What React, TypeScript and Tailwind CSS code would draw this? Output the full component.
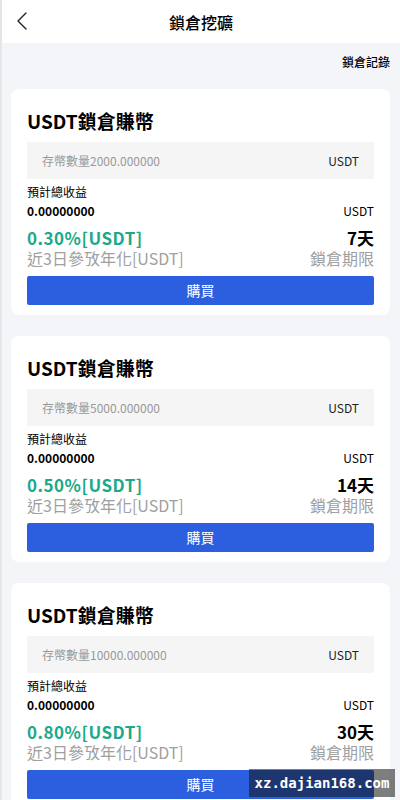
import React from "react";

const cards = [
  { amount: "2000.000000", rate: "0.30%[USDT]", days: "7天" },
  { amount: "5000.000000", rate: "0.50%[USDT]", days: "14天" },
  { amount: "10000.000000", rate: "0.80%[USDT]", days: "30天" },
];

function Card({ amount, rate, days }: { amount: string; rate: string; days: string }) {
  return (
    <div className="bg-white rounded-[8px] px-4 pt-[18px] pb-[10px]">
      <div className="text-[19px] leading-[28px] font-bold text-black">USDT鎖倉賺幣</div>
      <div className="mt-[7px] h-[37px] bg-[#f5f5f5] flex items-center justify-between pl-[15px] pr-[15px]">
        <span className="text-[12px] text-[#999999]">存幣數量{amount}</span>
        <span className="text-[12px] text-[#222222]">USDT</span>
      </div>
      <div className="mt-[4px] text-[12px] leading-[17px] text-black">預計總收益</div>
      <div className="flex justify-between items-center mt-[2px] leading-[17px]">
        <span className="text-[12px] font-bold text-black">0.00000000</span>
        <span className="text-[12px] text-black">USDT</span>
      </div>
      <div className="flex justify-between items-end mt-[9px]">
        <div className="flex flex-col">
          <span className="text-[17px] leading-[20px] font-bold text-[#1ba98a] tracking-[0.5px]">{rate}</span>
          <span className="text-[16px] leading-[20px] text-[#a0a0a0]">近3日參攷年化[USDT]</span>
        </div>
        <div className="flex flex-col items-end">
          <span className="text-[17px] leading-[20px] font-bold text-black">{days}</span>
          <span className="text-[16px] leading-[20px] text-[#a0a0a0]">鎖倉期限</span>
        </div>
      </div>
      <button className="mt-[8px] w-full h-[29px] bg-[#2b5fe0] rounded-[2px] text-white text-[14px] flex items-center justify-center">
        購買
      </button>
    </div>
  );
}

export default function App() {
  return (
    <div
      className="relative w-[400px] h-[800px] overflow-hidden bg-[#f4f5f9] border-l-[2px] border-[#e6e6e8]"
      style={{ fontFamily: '"Noto Sans CJK TC", "Noto Sans", sans-serif' }}
    >
      <div className="h-[43px] bg-white relative flex items-center justify-center">
        <svg className="absolute left-[12px] top-[11px]" width="16" height="20" viewBox="0 0 16 20" fill="none">
          <path d="M12 2 L4 10 L12 18" stroke="#222" strokeWidth="1.4" strokeLinecap="round" strokeLinejoin="round" />
        </svg>
        <span className="text-[16px] font-medium text-black">鎖倉挖礦</span>
      </div>
      <div className="flex justify-end pr-[10px] pt-[10px] h-[46px]">
        <span className="text-[12px] font-medium text-black leading-[17px]">鎖倉記錄</span>
      </div>
      <div className="flex flex-col gap-[21px] pl-[9px] pr-[10px]">
        {cards.map((c, i) => (
          <Card key={i} {...c} />
        ))}
      </div>
      <div
        className="absolute left-[247px] top-[769px] w-[146px] h-[28px] bg-[rgba(20,20,20,0.55)] flex items-center justify-center text-white text-[14px] font-bold"
        style={{ fontFamily: '"DejaVu Sans Mono", monospace' }}
      >
        xz.dajian168.com
      </div>
    </div>
  );
}
